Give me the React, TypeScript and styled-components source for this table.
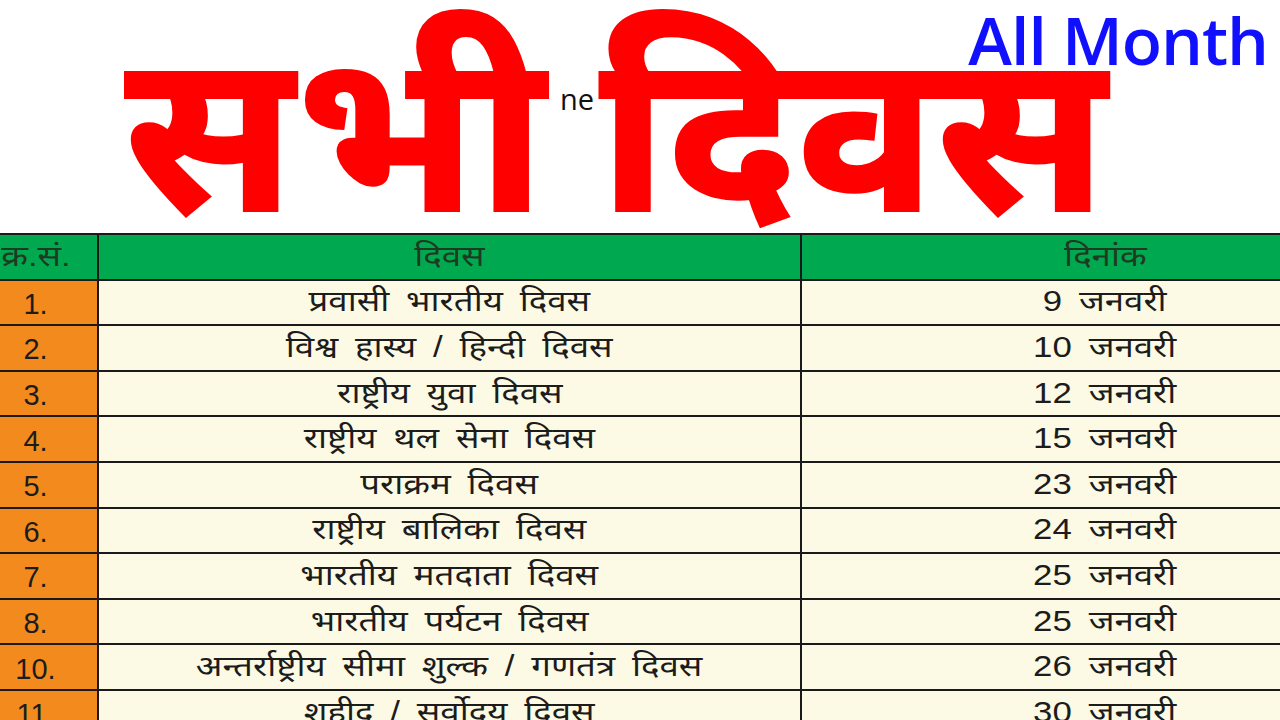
import React from "react";
import styled, { createGlobalStyle } from "styled-components";

const Global = createGlobalStyle`
  html, body { margin: 0; padding: 0; background: #ffffff; }
  body { width: 1280px; height: 720px; overflow: hidden; }
  #root { width: 1280px; height: 720px; }
`;

const DEV = `"Noto Sans Devanagari", "Lohit Devanagari", "Noto Sans", sans-serif`;

const Page = styled.div`
  position: relative;
  width: 1280px;
  height: 720px;
  overflow: hidden;
  background: #ffffff;
`;

const Top = styled.header`
  height: 233px;
  display: flex;
  justify-content: flex-end;
  align-items: flex-start;
  padding-right: 12px;
  box-sizing: border-box;
`;

const AllMonth = styled.div`
  font-family: "Open Sans", "Liberation Sans", sans-serif;
  font-weight: 600;
  font-size: 66px;
  line-height: 1;
  color: #1010ff;
  letter-spacing: -1px;
  margin-top: 6px;
`;

const Ghost = styled.span`
  position: absolute;
  left: 560px;
  top: 84px;
  font-family: "Open Sans", "Liberation Sans", sans-serif;
  font-size: 29px;
  line-height: 1;
  color: #111;
`;

const Title = styled.h1`
  position: absolute;
  left: 124px;
  top: 44px;
  margin: 0;
  font-family: ${DEV};
  font-weight: 800;
  font-size: 226px;
  line-height: 1;
  word-spacing: -6px;
  color: #ff0000;
  white-space: nowrap;
  z-index: 2;
  text-shadow: 4px 0 0 #fff, -4px 0 0 #fff, 0 4px 0 #fff, 0 -4px 0 #fff,
    3px 3px 0 #fff, -3px 3px 0 #fff, 3px -3px 0 #fff, -3px -3px 0 #fff;
`;

const Table = styled.div`
  display: grid;
  grid-template-columns: 125px 703px 608px;
  grid-auto-rows: 45.6px;
  margin-left: -26px;
  width: 1436px;
  border-top: 2px solid #1a1a1a;
`;

const Cell = styled.div<{ $kind: "head" | "num" | "body" }>`
  display: flex;
  align-items: center;
  justify-content: center;
  box-sizing: border-box;
  border-bottom: 2px solid #1a1a1a;
  border-right: 2px solid #1a1a1a;
  background: ${(p) =>
    p.$kind === "head" ? "#00a94f" : p.$kind === "num" ? "#f28a1e" : "#fcfae4"};
  color: ${(p) => (p.$kind === "head" ? "#1f3a22" : "#1c1c1c")};
  white-space: nowrap;
  padding-top: 4px;
`;

const Num = styled.span`
  font-family: "Liberation Sans Narrow", "Liberation Sans", sans-serif;
  font-size: 29px;
`;

const Label = styled.span`
  display: inline-block;
  font-family: "Liberation Sans", ${DEV};
  font-size: 29px;
  font-weight: 400;
  word-spacing: 6px;
  transform: scaleX(1.2);
`;

const rows: [string, string, string][] = [
  ["1.", "प्रवासी भारतीय दिवस", "9 जनवरी"],
  ["2.", "विश्व हास्य / हिन्दी दिवस", "10 जनवरी"],
  ["3.", "राष्ट्रीय युवा दिवस", "12 जनवरी"],
  ["4.", "राष्ट्रीय थल सेना दिवस", "15 जनवरी"],
  ["5.", "पराक्रम दिवस", "23 जनवरी"],
  ["6.", "राष्ट्रीय बालिका दिवस", "24 जनवरी"],
  ["7.", "भारतीय मतदाता दिवस", "25 जनवरी"],
  ["8.", "भारतीय पर्यटन दिवस", "25 जनवरी"],
  ["10.", "अन्तर्राष्ट्रीय सीमा शुल्क / गणतंत्र दिवस", "26 जनवरी"],
  ["11.", "शहीद / सर्वोदय दिवस", "30 जनवरी"],
];

export default function App() {
  return (
    <Page>
      <Global />
      <Top>
        <AllMonth>All Month</AllMonth>
      </Top>
      <Ghost>ne</Ghost>
      <Title>सभी दिवस</Title>
      <Table>
        <Cell $kind="head"><Label>क्र.सं.</Label></Cell>
        <Cell $kind="head"><Label>दिवस</Label></Cell>
        <Cell $kind="head"><Label>दिनांक</Label></Cell>
        {rows.map(([n, d, t]) => (
          <React.Fragment key={n}>
            <Cell $kind="num"><Num>{n}</Num></Cell>
            <Cell $kind="body"><Label>{d}</Label></Cell>
            <Cell $kind="body"><Label>{t}</Label></Cell>
          </React.Fragment>
        ))}
      </Table>
    </Page>
  );
}
